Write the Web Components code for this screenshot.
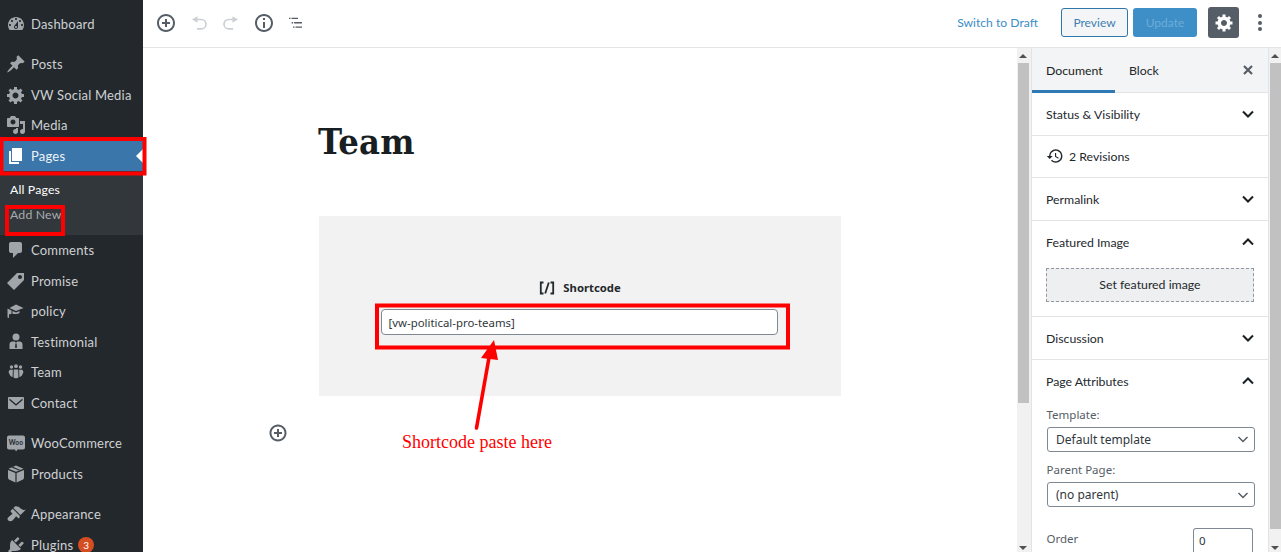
<!DOCTYPE html>
<html><head><meta charset="utf-8">
<style>
html,body{margin:0;padding:0;height:552px;overflow:hidden;background:#fff}
body{font-family:Lato,"Open Sans",sans-serif}
</style></head>
<body>
<template id="t-app"><style>
:host{display:grid;grid-template-columns:143px 1fr;width:1281px;height:552px;overflow:hidden;position:relative}
.main{display:flex;flex-direction:column;min-width:0;height:552px}
.body{display:flex;flex:1;min-height:0}
</style>
<slot name="menu"></slot>
<div class="main"><slot name="top"></slot><div class="body"><slot name="editor"></slot><slot name="side"></slot></div></div>
<slot name="over"></slot></template>

<template id="t-menu"><style>
:host{display:block;background:#23282d;height:552px;overflow:hidden;padding-top:8.5px;box-sizing:border-box}
::slotted(.sep){display:block;height:10px}
</style><slot></slot></template>

<template id="t-item"><style>
:host{display:flex;align-items:center;height:30.5px;color:#ced0d2;font-size:13px;letter-spacing:.2px;box-sizing:border-box;position:relative}
:host([active]){background:#3a76aa;color:#eef3f7}
.ic{width:20px;height:20px;margin-left:6px;margin-right:5px;flex:none;fill:#a0a5aa;display:block}
:host([active]) .ic{fill:#fff}
.mark{position:absolute;right:0;top:8px;border:7px solid transparent;border-right-color:#fff;border-left:0}
.ic svg{display:block;width:20px;height:20px}
.badge{display:inline-flex;align-items:center;justify-content:center;width:16px;height:16px;border-radius:50%;background:#d54e21;color:#fff;font-size:10px;letter-spacing:0;margin-left:5px}
</style><span class="ic"></span><span><slot></slot></span><span class="b"></span></template>

<template id="t-sub"><style>
:host{display:block;background:#32373c;height:64px;padding-top:6px;box-sizing:border-box;font-size:12.3px;letter-spacing:.15px}
::slotted(div){height:25px;line-height:25px;padding-left:10px;color:#a7abae}
::slotted(.cur){color:#fff}
</style><slot></slot></template>

<template id="t-top"><style>
:host{display:flex;align-items:center;height:48px;box-sizing:border-box;border-bottom:1px solid #e2e4e7;background:#fff;flex:none;padding-left:13px;padding-bottom:2px}
.tools{display:flex;align-items:center;gap:12.5px;flex:1;padding-top:1px}
.tools svg{width:20px;height:20px;display:block}
.draft{color:#3b8dc6;font-size:12.15px;margin-right:23px}
.btn{height:29px;box-sizing:border-box;border-radius:3px;font-size:12px;display:flex;align-items:center;justify-content:center}
.pv{width:67px;border:1px solid #2f76a9;background:#f3f5f6;color:#3f7fb1;margin-right:5px}
.up{width:64px;background:#3e8fc7;color:#6cacd7;margin-right:11px}
.gear{width:31px;height:31px;border-radius:3px;background:#555d66;display:flex;align-items:center;justify-content:center;margin-right:13px}
.gear svg{width:20px;height:20px;fill:#fff;display:block}
.dots{width:16px;display:flex;flex-direction:column;align-items:center;gap:2.6px;margin-right:13px}
.dots i{width:4px;height:4px;border-radius:50%;background:#555d66;display:block}
</style>
<div class="tools">
<svg viewBox="0 0 20 20" fill="#555d66"><path d="M10 1c-5 0-9 4-9 9s4 9 9 9 9-4 9-9-4-9-9-9zm0 16c-3.900 0-7-3.100-7-7s3.100-7 7-7 7 3.100 7 7-3.100 7-7 7zm1-11H9v3H6v2h3v3h2v-3h3V9h-3V6z"/></svg>
<svg viewBox="0 0 20 20" fill="none" stroke="#ccd0d4" stroke-width="1.700"><path d="M8.500 3.200v6.600L3 6.500z" fill="#ccd0d4" stroke="none"/><path d="M7 6.500h5.300a4.700 4.700 0 0 1 0 9.400H8"/></svg>
<svg viewBox="0 0 20 20" fill="none" stroke="#ccd0d4" stroke-width="1.700"><path d="M11.500 3.200v6.600L17 6.500z" fill="#ccd0d4" stroke="none"/><path d="M13 6.500H7.700a4.700 4.700 0 0 0 0 9.400H12"/></svg>
<svg viewBox="0 0 20 20" fill="#555d66"><path d="M10 1c-5 0-9 4-9 9s4 9 9 9 9-4 9-9-4-9-9-9zm0 16c-3.900 0-7-3.100-7-7s3.100-7 7-7 7 3.100 7 7-3.100 7-7 7zM9 9h2v6H9zm0-4h2v2H9z"/></svg>
<svg viewBox="0 0 20 20" fill="#555d66"><path d="M3 4.700h1.500v1.300H3zM5.500 4.700H12V6H5.500zM5.600 9.100h1.500v1.300H5.600zM8.100 9.100H16v1.300H8.100zM7 13.400h1.500v1.300H7zM9.500 13.400H16v1.300H9.500z"/></svg>
</div>
<span class="draft">Switch to Draft</span>
<div class="btn pv">Preview</div><div class="btn up">Update</div>
<div class="gear"><svg viewBox="0 0 20 20"><path d="M18 12h-2.180c-.17.7-.44 1.350-.81 1.930l1.540 1.540-2.100 2.100-1.540-1.540c-.58.36-1.230.63-1.910.79V19H8v-2.180c-.68-.16-1.330-.43-1.910-.79l-1.540 1.540-2.120-2.120 1.540-1.540c-.36-.58-.63-1.230-.79-1.910H1V9.030h2.170c.16-.7.44-1.350.8-1.940L2.430 5.550l2.100-2.100 1.540 1.540c.58-.37 1.240-.64 1.930-.81V2h3v2.180c.68.16 1.330.43 1.910.79l1.540-1.540 2.120 2.120-1.540 1.540c.36.59.64 1.240.8 1.940H18V12zm-8.500 1.500c1.660 0 3-1.340 3-3s-1.340-3-3-3-3 1.340-3 3 1.340 3 3 3z" transform="translate(.5 -.5)"/></svg></div>
<div class="dots"><i></i><i></i><i></i></div></template>

<template id="t-editor"><style>
:host{display:flex;flex:1;min-width:0;background:#fff}
.col{flex:1;min-width:0;display:flex;flex-direction:column;padding-left:175px}
h1{margin:71px 0 0;font:700 36px/44px "DejaVu Serif","Liberation Serif",serif;font-stretch:condensed;color:#191e23;height:44px;letter-spacing:.2px}
.slot{margin-top:53px;margin-left:1px}
.plus{margin:27px 0 0 -50px;width:20px;height:20px;display:block;flex:none}
</style><div class="col"><h1>Team</h1><div class="slot"><slot></slot></div>
<svg class="plus" viewBox="0 0 20 20" fill="#555d66"><path d="M10 1.500c-4.700 0-8.500 3.800-8.500 8.500s3.800 8.500 8.500 8.500 8.500-3.800 8.500-8.500-3.800-8.500-8.500-8.500zm0 15c-3.600 0-6.500-2.900-6.500-6.500S6.400 3.500 10 3.500s6.500 2.900 6.500 6.500-2.900 6.500-6.500 6.500zm1-10.500H9v3H6v2h3v3h2v-3h3V9h-3V6z"/></svg>
</div><slot name="bar"></slot></template>

<template id="t-bar"><style>
:host{display:block;width:var(--w,14px);flex:none;height:100%;background:#f1f1f1;position:relative;box-sizing:border-box;padding:15px 0 15px 1px}
.th{background:#c1c1c1;height:var(--h);width:11px}
.u,.d{position:absolute;left:2px;border:4px solid transparent;border-top:0;border-bottom:4px solid #505050;width:0;height:0}
.u{top:6px}.d{bottom:2px;transform:rotate(180deg)}
</style><div class="u"></div><div class="th"></div><div class="d"></div></template>

<template id="t-side"><style>
:host{display:flex;width:250px;flex:none;background:#fff}
.in{width:238px;box-sizing:border-box;border-left:1px solid #e2e4e7;border-right:1px solid #e2e4e7;overflow:hidden;height:504px;flex:none}
.tabs{display:flex;align-items:stretch;height:45px;background:#f3f4f5;border-bottom:1px solid #e2e4e7;box-sizing:border-box;font-size:12.3px;color:#191e23;position:relative}
.tab{padding:0 14px;display:flex;align-items:center;box-sizing:border-box}
.tab.on{border-bottom:3px solid #2f7ab4;padding-top:3px;width:83px;height:45px}
.tab.b{color:#23282d}
.x{margin-left:auto;margin-right:13px;align-self:center;width:14px;height:14px}
</style><div class="in">
<div class="tabs"><div class="tab on">Document</div><div class="tab b">Block</div>
<svg class="x" viewBox="0 0 14 14" stroke="#555d66" stroke-width="2.200" fill="none"><path d="M3 3l8 8M11 3l-8 8"/></svg></div>
<slot></slot></div><slot name="bar"></slot></template>

<template id="t-panel"><style>
:host{display:block;border-bottom:1px solid #e2e4e7;box-sizing:border-box;font-size:12.3px;color:#23282d}
.h{display:flex;align-items:center;height:41.67px;padding:0 13px 0 14px;box-sizing:border-box}
.t{flex:1;display:flex;align-items:center;gap:5px}
#t{padding-top:1px}
svg.c{width:14px;height:14px;fill:none;stroke:#191e23;stroke-width:2;display:block}
:host([open]) svg.c{transform:rotate(180deg)}
.ic{display:none;width:18px;height:18px;fill:#23282d}
:host([rev]) .ic{display:block}
:host([rev]) svg.c{display:none}
</style><div class="h"><span class="t"><svg class="ic" viewBox="0 0 24 24"><path d="M13 3a9 9 0 0 0-9 9H1l3.890 3.890.07.14L9 12H6c0-3.870 3.130-7 7-7s7 3.130 7 7-3.130 7-7 7c-1.930 0-3.680-.79-4.940-2.060l-1.420 1.420A8.954 8.954 0 0 0 13 21a9 9 0 0 0 0-18zm-1 5v5l4.280 2.540.72-1.210-3.500-2.080V8H12z"/></svg><span id="t"></span></span>
<svg class="c" viewBox="0 0 14 14"><path d="M2 4.500l5 5 5-5"/></svg></div><slot></slot></template>

<template id="t-fimg"><style>
:host{display:flex;align-items:center;justify-content:center;height:34px;margin:5px 14px 14.5px 14px;box-sizing:border-box;border:1px dashed #8f98a1;background:#edeff0;font-size:12.3px;color:#23282d}
</style><slot></slot></template>

<template id="t-attrs"><style>
:host{display:block;padding:4.5px 13px 0 14px;font:12px "Noto Sans","Open Sans",sans-serif;color:#555d66}
.l{height:17px;line-height:17px;margin-bottom:4px;font-size:11.5px;margin-left:.5px}
.s{display:flex;align-items:center;justify-content:space-between;height:25px;width:208px;box-sizing:border-box;border:1px solid #7e8993;border-radius:3px;padding:0 5px 0 8px;color:#32373c;margin-bottom:9.5px;background:#fff;margin-left:1px}
.s svg{width:12px;height:12px;fill:none;stroke:#555d66;stroke-width:1.500;display:block}
.o{display:flex;justify-content:space-between;padding-top:11px;margin-right:2px;align-items:flex-start}
.o .l{margin-top:2.5px}
.n{width:60px;height:24px;box-sizing:border-box;border:1px solid #7e8993;border-bottom:0;border-radius:3px 3px 0 0;padding:4px 0 0 5px;color:#32373c;line-height:16px;font-size:11.5px}
</style><div class="l">Template:</div>
<div class="s">Default template<svg viewBox="0 0 12 12"><path d="M1.500 4l4.500 4.500L10.500 4"/></svg></div>
<div class="l">Parent Page:</div>
<div class="s">(no parent)<svg viewBox="0 0 12 12"><path d="M1.500 4l4.500 4.500L10.500 4"/></svg></div>
<div class="o"><div class="l">Order</div><div class="n">0</div></div></template>

<template id="t-short"><style>
:host{display:flex;flex-direction:column;align-items:center;width:522px;height:180px;background:#f2f2f2;box-sizing:border-box;padding-top:62.5px}
.lab{display:flex;align-items:center;gap:8px;font:700 11.3px/18px "Noto Sans","Open Sans",sans-serif;color:#23282d;height:18px;margin-left:0}
.lab svg{width:16px;height:14px;display:block}
.inp{margin-top:12.5px;width:397px;height:26px;box-sizing:border-box;border:1px solid #7e8993;border-radius:4px;background:#fff;font:11.4px/25px "Noto Sans","Open Sans",sans-serif;color:#32373c;padding-left:7px;margin-left:-2px}
</style><div class="lab"><svg viewBox="0 0 16 14" fill="none" stroke="#23282d" stroke-width="1.800"><path d="M4.500 1.500H1.800v11h2.700M11.500 1.500h2.700v11h-2.700M9.800 1.500L6.200 12.500"/></svg>Shortcode</div><div class="inp">[vw-political-pro-teams]</div></template>

<template id="t-over"><style>
:host{position:absolute;left:0;top:0;width:1281px;height:552px;pointer-events:none;display:block}
svg{position:absolute;left:0;top:0}
.cap{position:absolute;left:402px;top:431px;font:18px/23px "Liberation Serif",serif;color:#f00;white-space:nowrap}
</style><svg width="1281" height="552" fill="none" stroke="#f00">
<rect x="1.500" y="139" width="143" height="34.500" stroke-width="4"/>
<rect x="7" y="207" width="56" height="27" stroke-width="4"/>
<rect x="377" y="305.500" width="411" height="42" stroke-width="4"/>
<path d="M476.500 428L490 352" stroke-width="3.600" stroke-linecap="round"/>
<path d="M494 340L481 358L498 360Z" fill="#f00" stroke="none"/>
</svg><div class="cap">Shortcode paste here</div></template>

<editor-app>
<wp-menu slot="menu">
<wp-item icon="dashboard">Dashboard</wp-item><span class="sep"></span>
<wp-item icon="pin">Posts</wp-item>
<wp-item icon="gear">VW Social Media</wp-item>
<wp-item icon="media">Media</wp-item>
<wp-item icon="page" active>Pages</wp-item>
<wp-sub><div class="cur">All Pages</div><div>Add New</div></wp-sub>
<wp-item icon="comment">Comments</wp-item>
<wp-item icon="tag">Promise</wp-item>
<wp-item icon="learn">policy</wp-item>
<wp-item icon="man">Testimonial</wp-item>
<wp-item icon="groups">Team</wp-item>
<wp-item icon="mail">Contact</wp-item><span class="sep"></span>
<wp-item icon="woo">WooCommerce</wp-item>
<wp-item icon="box">Products</wp-item><span class="sep"></span>
<wp-item icon="brush">Appearance</wp-item>
<wp-item icon="plug" badge="3">Plugins</wp-item>
</wp-menu>
<top-bar slot="top"></top-bar>
<editor-pane slot="editor"><shortcode-block></shortcode-block><scroll-bar slot="bar" h="340"></scroll-bar></editor-pane>
<doc-side slot="side">
<doc-panel title="Status &amp; Visibility"></doc-panel>
<doc-panel title="2 Revisions" rev></doc-panel>
<doc-panel title="Permalink"></doc-panel>
<doc-panel title="Featured Image" open><feat-img>Set featured image</feat-img></doc-panel>
<doc-panel title="Discussion"></doc-panel>
<doc-panel title="Page Attributes" open><page-attrs></page-attrs></doc-panel>
<scroll-bar slot="bar" h="466" style="--w:12px"></scroll-bar>
</doc-side>
<anno-layer slot="over"></anno-layer>
</editor-app>

<script>
const I={
dashboard:'<path d="M3.760 16h12.480c1.100-1.370 1.760-3.110 1.760-5 0-4.420-3.580-8-8-8s-8 3.580-8 8c0 1.890.66 3.630 1.760 5zM10 4c.55 0 1 .45 1 1s-.45 1-1 1-1-.45-1-1 .45-1 1-1zM6 6c.55 0 1 .45 1 1s-.45 1-1 1-1-.45-1-1 .45-1 1-1zm8 0c.55 0 1 .45 1 1s-.45 1-1 1-1-.45-1-1 .45-1 1-1zm-5.370 5.550L12 7v6c0 1.100-.9 2-2 2s-2-.9-2-2c0-.57.24-1.080.63-1.450zM4 10c.55 0 1 .45 1 1s-.45 1-1 1-1-.45-1-1 .45-1 1-1zm12 0c.55 0 1 .45 1 1s-.45 1-1 1-1-.45-1-1 .45-1 1-1zm-5 3c0-.55-.45-1-1-1s-1 .45-1 1 .45 1 1 1 1-.45 1-1z" fill-rule="evenodd"/>',
pin:'<path d="M10.440 3.020l1.820-1.820 6.360 6.350-1.830 1.820c-1.050-.68-2.480-.57-3.410.36l-.75.75c-.92.93-1.040 2.350-.35 3.410l-1.830 1.820-2.410-2.410-2.800 2.790c-.42.42-3.380 2.710-3.800 2.290s1.860-3.390 2.280-3.810l2.790-2.790L4.100 9.360l1.830-1.820c1.050.69 2.480.57 3.400-.36l.75-.75c.93-.92 1.050-2.350.36-3.410z"/>',
gear:'<path d="M18 12h-2.180c-.17.7-.44 1.350-.81 1.930l1.540 1.540-2.100 2.100-1.540-1.540c-.58.36-1.230.63-1.910.79V19H8v-2.180c-.68-.16-1.330-.43-1.910-.79l-1.540 1.540-2.120-2.120 1.540-1.540c-.36-.58-.63-1.230-.79-1.910H1V9.030h2.170c.16-.7.44-1.350.8-1.940L2.430 5.550l2.100-2.100 1.540 1.540c.58-.37 1.240-.64 1.930-.81V2h3v2.180c.68.16 1.330.43 1.910.79l1.540-1.540 2.120 2.120-1.540 1.540c.36.59.64 1.240.8 1.940H18V12zm-8.500 1.500c1.660 0 3-1.340 3-3s-1.340-3-3-3-3 1.340-3 3 1.340 3 3 3z"/>',
media:'<path d="M13 11V4c0-.55-.45-1-1-1h-1.670L9 1H5L3.670 3H2c-.55 0-1 .45-1 1v7c0 .55.45 1 1 1h10c.55 0 1-.45 1-1zM7 4.500c1.380 0 2.500 1.120 2.500 2.500S8.380 9.500 7 9.500 4.500 8.380 4.500 7 5.620 4.500 7 4.500zM14 6h5v10.500c0 1.380-1.120 2.500-2.500 2.500S14 17.880 14 16.500s1.120-2.500 2.500-2.500c.17 0 .34.02.5.05V9h-3V6zm-4 8.050V13h2v3.500c0 1.380-1.120 2.500-2.500 2.500S7 17.880 7 16.500 8.120 14 9.500 14c.17 0 .34.02.5.05z"/>',
page:'<path d="M6 15V2h10v13H6zm-1 1h8v2H3V5h2v11z"/>',
comment:'<path d="M5 2h9c1.100 0 2 .9 2 2v7c0 1.100-.9 2-2 2h-2l-5 5v-5H5c-1.100 0-2-.9-2-2V4c0-1.100.9-2 2-2z"/>',
tag:'<path fill-rule="evenodd" d="M11 2h7v7L8 19l-7-7zm3 6c1.100 0 2-.9 2-2s-.9-2-2-2-2 .9-2 2 .9 2 2 2z"/>',
learn:'<path d="M10 10L3.500 7 10 3.500 17.500 7zM1.500 7.500V16.500L3 17v-3.500L5.500 12.800V9.500zM6.500 10v2.700C8 13 11 13.500 13.500 12V10L10 11.500z"/>',
man:'<circle cx="10" cy="5" r="3.500"/><path d="M6.500 9.500h2.300L10 11l1.200-1.500h2.300c1.800 0 3 1.200 3 3V17h-13v-4.500c0-1.800 1.200-3 3-3zM9.500 11.500L9 15l1 1.500 1-1.500-.5-3.500z" fill-rule="evenodd"/>',
groups:'<circle cx="10" cy="4.200" r="1.900"/><circle cx="5.500" cy="5" r="1.700"/><circle cx="14.500" cy="5" r="1.700"/><path d="M7.800 7.500h4.400l.3 7.800c-.8 1.400-4.200 1.400-5 0zM3.700 7.800h3.200l-.3 7.200c-1.200-.2-2.300-.8-2.600-1.700L2.500 10zM13.100 7.800h3.200l1.200 2.200-1.500 3.300c-.3.9-1.400 1.500-2.600 1.700z"/>',
mail:'<path fill-rule="evenodd" d="M3 4h14c.55 0 1 .45 1 1v10c0 .55-.45 1-1 1H3c-.55 0-1-.45-1-1V5c0-.55.45-1 1-1zm.5 1.500L10 11l6.500-5.500v1.700L10 12.700 3.500 7.200z"/>',
woo:'<path d="M3 2.500h14c1.100 0 2 .9 2 2v10c0 1.100-.9 2-2 2h-5.500L10 18.500 9 16.500H3c-1.100 0-2-.9-2-2v-10c0-1.100.9-2 2-2z"/><text x="10" y="12" text-anchor="middle" font-family="Lato,sans-serif" font-size="6.500" font-weight="700" fill="#23282d">Woo</text>',
box:'<path d="M10 1.500l7.500 3.200L10 7.800 2.500 4.700zM2 6l7.400 3.100V18.500L3.500 15.800C2.600 15.400 2 14.500 2 13.500zM18 6l-7.400 3.100v9.400l5.900-2.700c.9-.4 1.500-1.300 1.500-2.300z"/><path d="M7 2.800l7.300 3.200-1.300.6-7.400-3.200z" fill="#23282d"/>',
brush:'<path d="M14.480 11.060L7.410 3.990l1.500-1.500c.5-.56 2.300-.47 3.510.32 1.210.8 1.430 1.280 2.910 2.100 1.180.64 2.450 1.260 4.450.85zm-.71.71L6.700 4.700 4.930 6.470c-.39.39-.39 1.020 0 1.410l1.060 1.060c.39.39.39 1.030 0 1.420-.6.6-1.430 1.110-2.210 1.690-.35.26-.7.53-1.010.84C1.430 13.230.99 15.240 2.300 16.540c1.330 1.330 3.370.9 4.720-.44.31-.31.58-.66.84-1.010.58-.78 1.090-1.610 1.690-2.210.39-.39 1.030-.39 1.420 0l1.060 1.060c.39.39 1.020.39 1.410 0z"/>',
plug:'<path d="M13.110 4.360L9.870 7.600 8 5.730l3.240-3.240c.35-.34 1.050-.2 1.560.32.52.51.66 1.210.31 1.550zm-8 1.770l.91-1.120 9.010 9.010-1.190.84c-.71.71-2.630 1.160-3.820 1.160H6.140L4.900 17.260c-.59.59-1.540.59-2.120 0-.59-.58-.59-1.530 0-2.120l1.240-1.240v-3.880c0-1.130.4-3.190 1.090-3.890zm7.260 3.970l3.240-3.240c.34-.35 1.040-.21 1.550.31.52.51.66 1.210.31 1.550l-3.240 3.250z"/>'
};
function def(tag,tid,init){customElements.define(tag,class extends HTMLElement{
 constructor(){super();this.attachShadow({mode:'open'}).appendChild(document.getElementById(tid).content.cloneNode(true));}
 connectedCallback(){init&&init.call(this,this.shadowRoot);}
});}
def('editor-app','t-app');def('wp-menu','t-menu');
def('wp-item','t-item',function(s){
 s.querySelector('.ic').innerHTML='<svg viewBox="0 0 20 20">'+(I[this.getAttribute('icon')]||'')+'</svg>';
 if(this.hasAttribute('active')){const m=document.createElement('span');m.className='mark';s.appendChild(m);}
 const b=this.getAttribute('badge');if(b){s.querySelector('.b').innerHTML='<span class="badge">'+b+'</span>';}
});
def('wp-sub','t-sub');def('top-bar','t-top');def('editor-pane','t-editor');
def('scroll-bar','t-bar',function(s){s.querySelector('.th').style.setProperty('--h',this.getAttribute('h')+'px');});
def('doc-side','t-side');
def('doc-panel','t-panel',function(s){s.getElementById('t').textContent=this.getAttribute('title');});
def('feat-img','t-fimg');def('page-attrs','t-attrs');def('shortcode-block','t-short');def('anno-layer','t-over');
</script>
</body></html>
